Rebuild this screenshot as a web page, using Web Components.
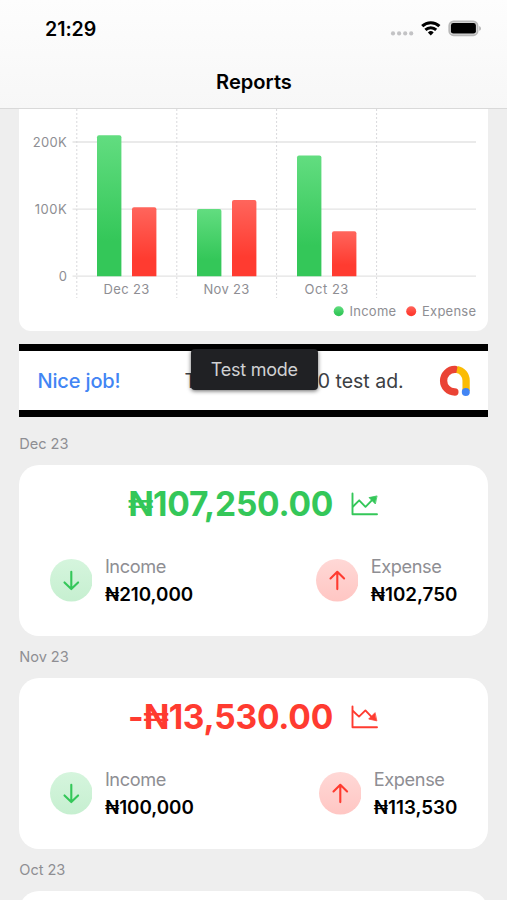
<!DOCTYPE html>
<html lang="en">
<head>
<meta charset="utf-8">
<title>Reports</title>
<style>
html,body{margin:0;height:100%;overflow:hidden;background:#eee}
body{font-family:Inter,"Liberation Sans",sans-serif;color:#000}
</style>
</head>
<body>
<reports-screen></reports-screen>
<script>
const define = (name, render) => customElements.define(name, class extends HTMLElement {
  connectedCallback() {
    if (!this.shadowRoot) this.attachShadow({mode: 'open'}).innerHTML = render(this);
  }
});

define('status-bar', () => `
<style>
:host{display:flex;justify-content:space-between;height:57px;box-sizing:border-box;padding:17px 25.5px 0 45px}
.time{font-size:19.6px;line-height:24px;font-weight:600;letter-spacing:-.05px}
svg{display:block;margin-top:1px}
</style>
<span class="time">21:29</span>
<svg width="92" height="22" viewBox="390 18 92 22">
  <g fill="#c3c3c5"><circle cx="393" cy="33.4" r="2.1"/><circle cx="399.1" cy="33.4" r="2.1"/><circle cx="405.2" cy="33.4" r="2.1"/><circle cx="411.2" cy="33.4" r="2.1"/></g>
  <g fill="none" stroke="#000" stroke-width="3"><path d="M422.2 26.1a12.4 12.4 0 0 1 17.2 0"/><path d="M425.4 29.8a7.9 7.9 0 0 1 10.8 0"/></g>
  <path d="M430.8 35.4l-2.9-2.9a4.2 4.2 0 0 1 5.8 0z"/>
  <rect x="449.2" y="21.3" width="28.4" height="14" rx="4.4" fill="#ddd" stroke="#b9b9b9" stroke-width="1.7"/>
  <rect x="450.9" y="23" width="25" height="10.6" rx="2.4"/>
  <path d="M479.2 26v4.8q1.8-.6 1.8-2.4t-1.8-2.4z" fill="#b5b5b5"/>
</svg>`);

define('nav-header', () => `
<style>
:host{display:block;height:109px;box-sizing:border-box;background:linear-gradient(#fdfdfd,#f7f7f7);border-bottom:1px solid #d9d9d9}
h1{margin:0;padding-top:1px;height:48px;line-height:48px;font-size:20.1px;font-weight:600;text-align:center;text-indent:1px}
</style>
<status-bar></status-bar><h1><slot></slot></h1>`);

define('report-chart', () => {
  const base = 276.2;
  const bars = [[97,135.3,'g'],[132,207.3,'r'],[197,209,'g'],[232,200,'r'],[297,155.6,'g'],[332,231.3,'r']];
  return `
<style>
:host{display:block;height:222px;background:#fff;border-radius:0 0 12px 12px}
svg{display:block}
text{font-size:13px;fill:#8e8e93}
</style>
<svg width="469" height="222" viewBox="19 109 469 222">
  <defs>
    <linearGradient id="g" x1="0" y1="0" x2="0" y2="1"><stop offset="0" stop-color="#62dd80"/><stop offset=".75" stop-color="#34c759"/></linearGradient>
    <linearGradient id="r" x1="0" y1="0" x2="0" y2="1"><stop offset="0" stop-color="#ff655c"/><stop offset=".75" stop-color="#ff3b30"/></linearGradient>
  </defs>
  ${[142, 209.2, 276.2].map(y => `<path d="M72.5 ${y}H476" stroke="#e3e3e3" stroke-width="1.3"/>`).join('')}
  ${[76.8, 176.8, 276.6, 376.6].map(x => `<path d="M${x} 109V298" stroke="#d9d9dc" stroke-width="1" stroke-dasharray="2 2"/>`).join('')}
  ${bars.map(([x, y, c]) => `<path d="M${x} ${base}V${y + 2}q0-2 2-2h20.4q2 0 2 2V${base}z" fill="url(#${c})"/>`).join('')}
  <g text-anchor="end"><text x="66.7" y="146.8" textLength="34">200K</text><text x="66.7" y="213.9" textLength="32">100K</text><text x="66.9" y="280.9">0</text></g>
  <text x="103.4" y="294.3" textLength="46">Dec 23</text>
  <text x="203.4" y="294.3" textLength="46">Nov 23</text>
  <text x="304.4" y="294.3" textLength="44">Oct 23</text>
  <circle cx="338.7" cy="311.3" r="5" fill="url(#g)"/><text x="349.4" y="315.9" textLength="46.8">Income</text>
  <circle cx="411.2" cy="311.3" r="5" fill="url(#r)"/><text x="422" y="315.9" textLength="54">Expense</text>
</svg>`;
});

define('ad-banner', () => `
<style>
:host{display:flex;position:relative;height:73px;box-sizing:border-box;border-top:7px solid #000;border-bottom:7px solid #000;background:#fff;align-items:center;padding:1px 17px 0 18.2px;white-space:nowrap}
.nice{font:500 20px Inter,sans-serif;color:#4285f4;width:147px;letter-spacing:-.15px}
.msg{font:400 19.5px Inter,sans-serif;color:#3c4043;flex:1}
.tight{letter-spacing:-.56px}
.badge{position:absolute;left:171.5px;top:-2px;width:127px;height:41px;box-sizing:border-box;border-radius:4px;background:#202124;color:#d0d1d3;font:400 18px/42px Inter,sans-serif;letter-spacing:-.25px;text-align:center;box-shadow:0 1px 4px #0009}
svg{display:block;flex:none}
</style>
<span class="nice">Nice job!</span><span class="msg">T<span class="tight">his is a 468x6</span>0 test ad.</span>
<svg width="32" height="32" viewBox="439 365 32 32">
  <path d="M454.9 369.4a11.3 11.3 0 1 0 0 22.6" fill="none" stroke="#ea4335" stroke-width="7.3" stroke-linecap="round"/>
  <path d="M457 369.5A11 11 0 0 1 466.1 380.5V391" fill="none" stroke="#fbbc04" stroke-width="7.3"/>
  <circle cx="465.8" cy="392" r="4" fill="#4285f4"/>
</svg>
<span class="badge">Test mode</span>`);

define('flow-stat', el => {
  const income = el.getAttribute('kind') === 'income';
  const arrow = income ? 'M21.3 12.8V30.1M14.5 23.4L21.3 30.1L28.1 23.4' : 'M21.3 30.1V12.8M14.5 19.5L21.3 12.8L28.1 19.5';
  return `
<style>
:host{display:flex;align-items:center;gap:12.5px}
svg{display:block}
.label,.value{display:block;line-height:27.5px;white-space:nowrap}
.label{font-size:18.2px;color:#8e8e93;font-weight:400;letter-spacing:-.4px}
.value{font-size:18.8px;font-weight:600;letter-spacing:-.02px;position:relative;top:.5px}
</style>
<svg width="42.6" height="42.6" viewBox="0 0 42.6 42.6">
  <defs><linearGradient id="c" x2="0" y2="1"><stop stop-color="${income ? '#d5f5dd' : '#ffd8d6'}"/><stop offset="1" stop-color="${income ? '#c6efd0' : '#ffc6c3'}"/></linearGradient></defs>
  <circle cx="21.3" cy="21.3" r="21.3" fill="url(#c)"/>
  <path d="${arrow}" fill="none" stroke="${income ? '#34c759' : '#ff3b30'}" stroke-width="2.1" stroke-linecap="round" stroke-linejoin="round"/>
</svg>
<div><span class="label">${income ? 'Income' : 'Expense'}</span><span class="value"><slot></slot></span></div>`;
});

define('month-report', el => {
  const a = n => el.getAttribute(n) || '';
  const up = a('trend') === 'up';
  return `
<style>
:host{display:block;height:213px}
h2{margin:0;height:42px;line-height:43px;font-size:14.6px;font-weight:400;color:#8e8e93;letter-spacing:-.05px}
.card{background:#fff;border-radius:20px;height:171px;box-sizing:border-box;padding:17px 31px 0 30.5px}
.total{display:flex;align-items:center;justify-content:center;gap:18px;height:44px;font-size:33.5px;font-weight:700;color:${up ? '#34c759' : '#ff3b30'};letter-spacing:-.22px}
.total svg{display:block;flex:none}
.row{display:flex;justify-content:space-between;margin-top:27px}
</style>
<h2>${a('month')}</h2>
<div class="card">${a('total') ? `
  <div class="total"><span>${a('total')}</span>
    <svg width="28" height="24" viewBox="350.8 492 28 24" fill="none" stroke="currentColor" stroke-width="1.9" stroke-linecap="round" stroke-linejoin="round">
      <path d="M352.3 493.5V514.2H376.8"/>
      ${up ? '<path d="M352.8 506.5L359 500.3L365.3 506.8L373.3 498.7"/><path d="M376.5 496L368.8 497.6L374.9 503.7Z" fill="currentColor" stroke-width=".8"/>'
           : '<path d="M352.8 498L358.8 503.6L365.2 497.4L372.3 504.8"/><path d="M376.3 507.8L368.5 506L374.6 499.9Z" fill="currentColor" stroke-width=".8"/>'}
    </svg>
  </div>
  <div class="row"><flow-stat kind="income">${a('income')}</flow-stat><flow-stat kind="expense">${a('expense')}</flow-stat></div>` : ''}
</div>`;
});

define('reports-screen', () => `
<style>
:host{display:block;width:507px;height:900px;overflow:hidden;background:#eee}
main{padding:0 18.7px 0 19.3px}
ad-banner{margin:13px 0 6px}
</style>
<nav-header>Reports</nav-header>
<main>
  <report-chart></report-chart>
  <ad-banner></ad-banner>
  <month-report month="Dec 23" total="₦107,250.00" trend="up" income="₦210,000" expense="₦102,750"></month-report>
  <month-report month="Nov 23" total="-₦13,530.00" trend="down" income="₦100,000" expense="₦113,530"></month-report>
  <month-report month="Oct 23"></month-report>
</main>`);
</script>
</body>
</html>
